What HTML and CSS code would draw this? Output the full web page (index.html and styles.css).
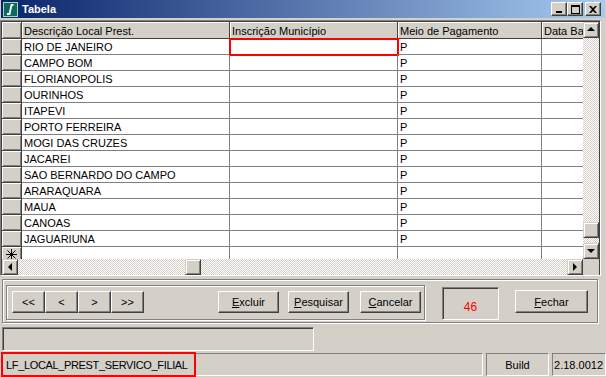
FILE: index.html
```html
<!DOCTYPE html>
<html>
<head>
    <title>Tabela</title>
    <link rel="stylesheet" href="styles.css">
</head>
<body>

<div class="window">

    <!-- Title Bar -->
    <div class="titlebar">
        <svg class="app-icon" width="15" height="15" viewBox="0 0 15 15">
            <rect x="0.5" y="0.5" width="14" height="14" fill="#0b6a5e" stroke="#9fd8b8"/>
            <path d="M10.5 3 L8.5 3 L6.5 12 L4 12" fill="none" stroke="#fff" stroke-width="1.8"/>
        </svg>
        <span class="title">Tabela</span>
        <div class="caption-buttons">
            <span class="cap-btn">
                <svg width="8" height="7" viewBox="0 0 8 7"><rect x="1" y="5" width="6" height="2" fill="#000"/></svg>
            </span>
            <span class="cap-btn">
                <svg width="9" height="9" viewBox="0 0 9 9"><rect x="0.5" y="0.5" width="8" height="8" fill="none" stroke="#000"/><rect x="0" y="0" width="9" height="2" fill="#000"/></svg>
            </span>
            <span class="cap-btn close">
                <svg width="8" height="7" viewBox="0 0 8 7"><path d="M0 0 L2 0 L4 2 L6 0 L8 0 L5 3.5 L8 7 L6 7 L4 5 L2 7 L0 7 L3 3.5 Z" fill="#000"/></svg>
            </span>
        </div>
    </div>

    <!-- Data Grid -->
    <div class="grid-frame">
        <div class="grid-body">
            <div class="row head">
                <div class="cell ind"></div>
                <div class="cell c1">Descrição Local Prest.</div>
                <div class="cell c2">Inscrição Município</div>
                <div class="cell c3">Meio de Pagamento</div>
                <div class="cell c4">Data Base</div>
            </div>
            <div class="row"><div class="cell ind"></div><div class="cell c1">RIO DE JANEIRO</div><div class="cell c2 focus"></div><div class="cell c3">P</div><div class="cell c4"></div></div>
            <div class="row"><div class="cell ind"></div><div class="cell c1">CAMPO BOM</div><div class="cell c2"></div><div class="cell c3">P</div><div class="cell c4"></div></div>
            <div class="row"><div class="cell ind"></div><div class="cell c1">FLORIANOPOLIS</div><div class="cell c2"></div><div class="cell c3">P</div><div class="cell c4"></div></div>
            <div class="row"><div class="cell ind"></div><div class="cell c1">OURINHOS</div><div class="cell c2"></div><div class="cell c3">P</div><div class="cell c4"></div></div>
            <div class="row"><div class="cell ind"></div><div class="cell c1">ITAPEVI</div><div class="cell c2"></div><div class="cell c3">P</div><div class="cell c4"></div></div>
            <div class="row"><div class="cell ind"></div><div class="cell c1">PORTO FERREIRA</div><div class="cell c2"></div><div class="cell c3">P</div><div class="cell c4"></div></div>
            <div class="row"><div class="cell ind"></div><div class="cell c1">MOGI DAS CRUZES</div><div class="cell c2"></div><div class="cell c3">P</div><div class="cell c4"></div></div>
            <div class="row"><div class="cell ind"></div><div class="cell c1">JACAREI</div><div class="cell c2"></div><div class="cell c3">P</div><div class="cell c4"></div></div>
            <div class="row"><div class="cell ind"></div><div class="cell c1">SAO BERNARDO DO CAMPO</div><div class="cell c2"></div><div class="cell c3">P</div><div class="cell c4"></div></div>
            <div class="row"><div class="cell ind"></div><div class="cell c1">ARARAQUARA</div><div class="cell c2"></div><div class="cell c3">P</div><div class="cell c4"></div></div>
            <div class="row"><div class="cell ind"></div><div class="cell c1">MAUA</div><div class="cell c2"></div><div class="cell c3">P</div><div class="cell c4"></div></div>
            <div class="row"><div class="cell ind"></div><div class="cell c1">CANOAS</div><div class="cell c2"></div><div class="cell c3">P</div><div class="cell c4"></div></div>
            <div class="row"><div class="cell ind"></div><div class="cell c1">JAGUARIUNA</div><div class="cell c2"></div><div class="cell c3">P</div><div class="cell c4"></div></div>
            <div class="row">
                <div class="cell ind">
                    <svg width="11" height="11" viewBox="0 0 11 11"><path d="M5.5 0 V11 M0 5.5 H11 M1.5 1.5 L9.5 9.5 M9.5 1.5 L1.5 9.5" stroke="#000" stroke-width="1"/></svg>
                </div>
                <div class="cell c1"></div><div class="cell c2"></div><div class="cell c3"></div><div class="cell c4"></div>
            </div>
        </div>

        <div class="vscroll">
            <span class="sbtn"><i class="arrow up"></i></span>
            <span class="track" style="height:184px"></span>
            <span class="sbtn"></span>
            <span class="track" style="height:5px"></span>
            <span class="sbtn"><i class="arrow down"></i></span>
        </div>

        <div class="hscroll">
            <span class="sbtn"><i class="arrow left"></i></span>
            <span class="track" style="width:167px"></span>
            <span class="sbtn"></span>
            <span class="track fill"></span>
            <span class="sbtn"><i class="arrow right"></i></span>
        </div>

        <div class="corner"></div>
    </div>

    <!-- Navigation Panel -->
    <div class="nav-panel">
        <div class="group">
            <button class="btn nav">&lt;&lt;</button>
            <button class="btn nav">&lt;</button>
            <button class="btn nav">&gt;</button>
            <button class="btn nav">&gt;&gt;</button>
            <button class="btn action excluir"><u>E</u>xcluir</button>
            <button class="btn action pesquisar"><u>P</u>esquisar</button>
            <button class="btn action cancelar"><u>C</u>ancelar</button>
        </div>
        <div class="counter">46</div>
        <button class="btn fechar"><u>F</u>echar</button>
    </div>

    <div class="msg-field"></div>

    <!-- Status Bar -->
    <div class="statusbar">
        <div class="panel p1"><span class="table-name">LF_LOCAL_PREST_SERVICO_FILIAL</span></div>
        <div class="panel p2">Build</div>
        <div class="panel p3">2.18.0012</div>
    </div>

</div>

</body>
</html>
```

FILE: styles.css
```css
body {
    margin: 0;
    padding: 0;
    background-color: #d4d0c8;
    font-family: "Liberation Sans", Arial, sans-serif;
    font-size: 11px;
    color: #000;
}

.window {
    width: 606px;
    height: 377px;
    overflow: hidden;
    background-color: #d4d0c8;
}

/* ---- Title Bar ---- */
.titlebar {
    height: 18px;
    margin: 0 1px;
    display: flex;
    align-items: center;
    background: linear-gradient(to right, #0a246a, #a6caf0);
}
.app-icon {
    margin-left: 2px;
    flex: none;
}
.title {
    margin-left: 4px;
    color: #fff;
    font-weight: bold;
    font-size: 11px;
}
.caption-buttons {
    margin-left: auto;
    margin-right: 4px;
    display: flex;
}
.cap-btn {
    box-sizing: border-box;
    width: 16px;
    height: 14px;
    display: flex;
    align-items: center;
    justify-content: center;
    background-color: #d4d0c8;
    border: 1px solid;
    border-color: #fff #404040 #404040 #fff;
    box-shadow: inset -1px -1px 0 #808080;
}
.cap-btn.close {
    margin-left: 2px;
}

/* ---- Grid ---- */
.grid-frame {
    margin-top: 2px;
    width: 598px;
    display: grid;
    grid-template-columns: 581px 16px;
    grid-template-rows: 237px 16px;
    border: 1px solid;
    border-color: #808080 #fff #fff #808080;
    padding: 1px 0 0 1px;
    background-color: #404040;
}
.grid-body {
    overflow: hidden;
    background-color: #fff;
}
.row {
    display: flex;
    height: 16px;
}
.row.head {
    height: 17px;
}
.cell {
    box-sizing: border-box;
    flex: none;
    height: 100%;
    padding: 1px 2px 0;
    line-height: 15px;
    white-space: nowrap;
    overflow: hidden;
    border-right: 1px solid #808080;
    border-bottom: 1px solid #808080;
}
.ind { width: 20px; }
.c1 { width: 208px; }
.c2 { width: 168px; }
.c3 { width: 144px; }
.c4 { width: 120px; }

.head .cell {
    background-color: #d4d0c8;
    border-right-color: #404040;
    border-bottom-color: #404040;
    box-shadow: inset 1px 1px 0 #fff;
    line-height: 16px;
}
.cell.ind {
    background-color: #d4d0c8;
    border-right-color: #404040;
    border-bottom-color: #404040;
    box-shadow: inset 1px 1px 0 #fff, inset -1px -1px 0 #808080;
    display: flex;
    align-items: center;
    justify-content: center;
    padding: 0;
}
.cell.focus {
    outline: 2px solid #f00;
    outline-offset: -1px;
}

/* ---- Scroll Bars ---- */
.vscroll, .hscroll {
    display: flex;
}
.vscroll {
    flex-direction: column;
}
.sbtn {
    box-sizing: border-box;
    flex: none;
    width: 16px;
    height: 16px;
    display: flex;
    align-items: center;
    justify-content: center;
    background-color: #d4d0c8;
    border: 1px solid;
    border-color: #d4d0c8 #404040 #404040 #d4d0c8;
    box-shadow: inset 1px 1px 0 #fff, inset -1px -1px 0 #808080;
}
.track {
    flex: none;
    background: repeating-conic-gradient(#d4d0c8 0 25%, #fff 0 50%) 0 0 / 2px 2px;
}
.hscroll .track {
    height: 16px;
}
.track.fill {
    flex: 1;
}
.arrow {
    width: 0;
    height: 0;
    border-style: solid;
    border-color: transparent;
}
.arrow.up {
    border-width: 0 4px 4px 4px;
    border-bottom-color: #000;
    margin-top: -2px;
}
.arrow.down {
    border-width: 4px 4px 0 4px;
    border-top-color: #000;
}
.arrow.left {
    border-width: 4px 4px 4px 0;
    border-right-color: #000;
}
.arrow.right {
    border-width: 4px 0 4px 4px;
    border-left-color: #000;
}
.corner {
    background-color: #d4d0c8;
}

/* ---- Navigation Panel ---- */
.nav-panel {
    box-sizing: border-box;
    margin: 3px 0 0 2px;
    width: 596px;
    height: 44px;
    display: flex;
    align-items: flex-start;
    border: 1px solid #808080;
    box-shadow: 1px 1px 0 #fff, inset 1px 1px 0 #fff;
}
.group {
    box-sizing: border-box;
    margin: 5px 0 0 3px;
    width: 419px;
    height: 35px;
    display: flex;
    align-items: flex-start;
    padding: 5px 0 0 5px;
    border: 1px solid #808080;
    box-shadow: 1px 1px 0 #fff, inset 1px 1px 0 #fff;
}
.btn {
    box-sizing: border-box;
    flex: none;
    height: 22px;
    padding: 0;
    font-family: "Liberation Sans", Arial, sans-serif;
    font-size: 11px;
    color: #000;
    background-color: #d4d0c8;
    border: 1px solid;
    border-color: #fff #404040 #404040 #fff;
    box-shadow: inset -1px -1px 0 #808080;
}
.btn.nav {
    width: 33px;
}
.btn.action {
    width: 61px;
}
.excluir { margin-left: 74px; }
.pesquisar { margin-left: 9px; }
.cancelar { margin-left: 11px; }

.counter {
    box-sizing: border-box;
    flex: none;
    margin: 7px 0 0 17px;
    width: 57px;
    height: 33px;
    padding-top: 12px;
    text-align: center;
    color: #f00;
    font-size: 12px;
    border: 1px solid;
    border-color: #808080 #fff #fff #808080;
    box-shadow: inset 1px 1px 0 #404040;
}
.btn.fechar {
    margin: 10px 0 0 16px;
    width: 73px;
    height: 23px;
}

/* ---- Message Field ---- */
.msg-field {
    box-sizing: border-box;
    margin: 4px 0 0 2px;
    width: 312px;
    height: 24px;
    border: 1px solid;
    border-color: #808080 #fff #fff #808080;
    box-shadow: inset 1px 1px 0 #404040;
}

/* ---- Status Bar ---- */
.statusbar {
    margin: 2px 0 0 2px;
    height: 23px;
    display: flex;
    gap: 3px;
}
.panel {
    box-sizing: border-box;
    height: 23px;
    padding-top: 1px;
    line-height: 21px;
    border: 1px solid;
    border-color: #808080 #fff #fff #808080;
}
.p1 { width: 481px; padding-top: 0; }
.p2 { width: 63px; text-align: center; }
.p3 { width: 54px; text-align: right; padding-right: 2px; }
.table-name {
    display: block;
    width: 191px;
    height: 21px;
    padding: 1px 0 0 3px;
    box-sizing: border-box;
    letter-spacing: -0.35px;
    outline: 2px solid #f00;
    outline-offset: 0;
}
```
